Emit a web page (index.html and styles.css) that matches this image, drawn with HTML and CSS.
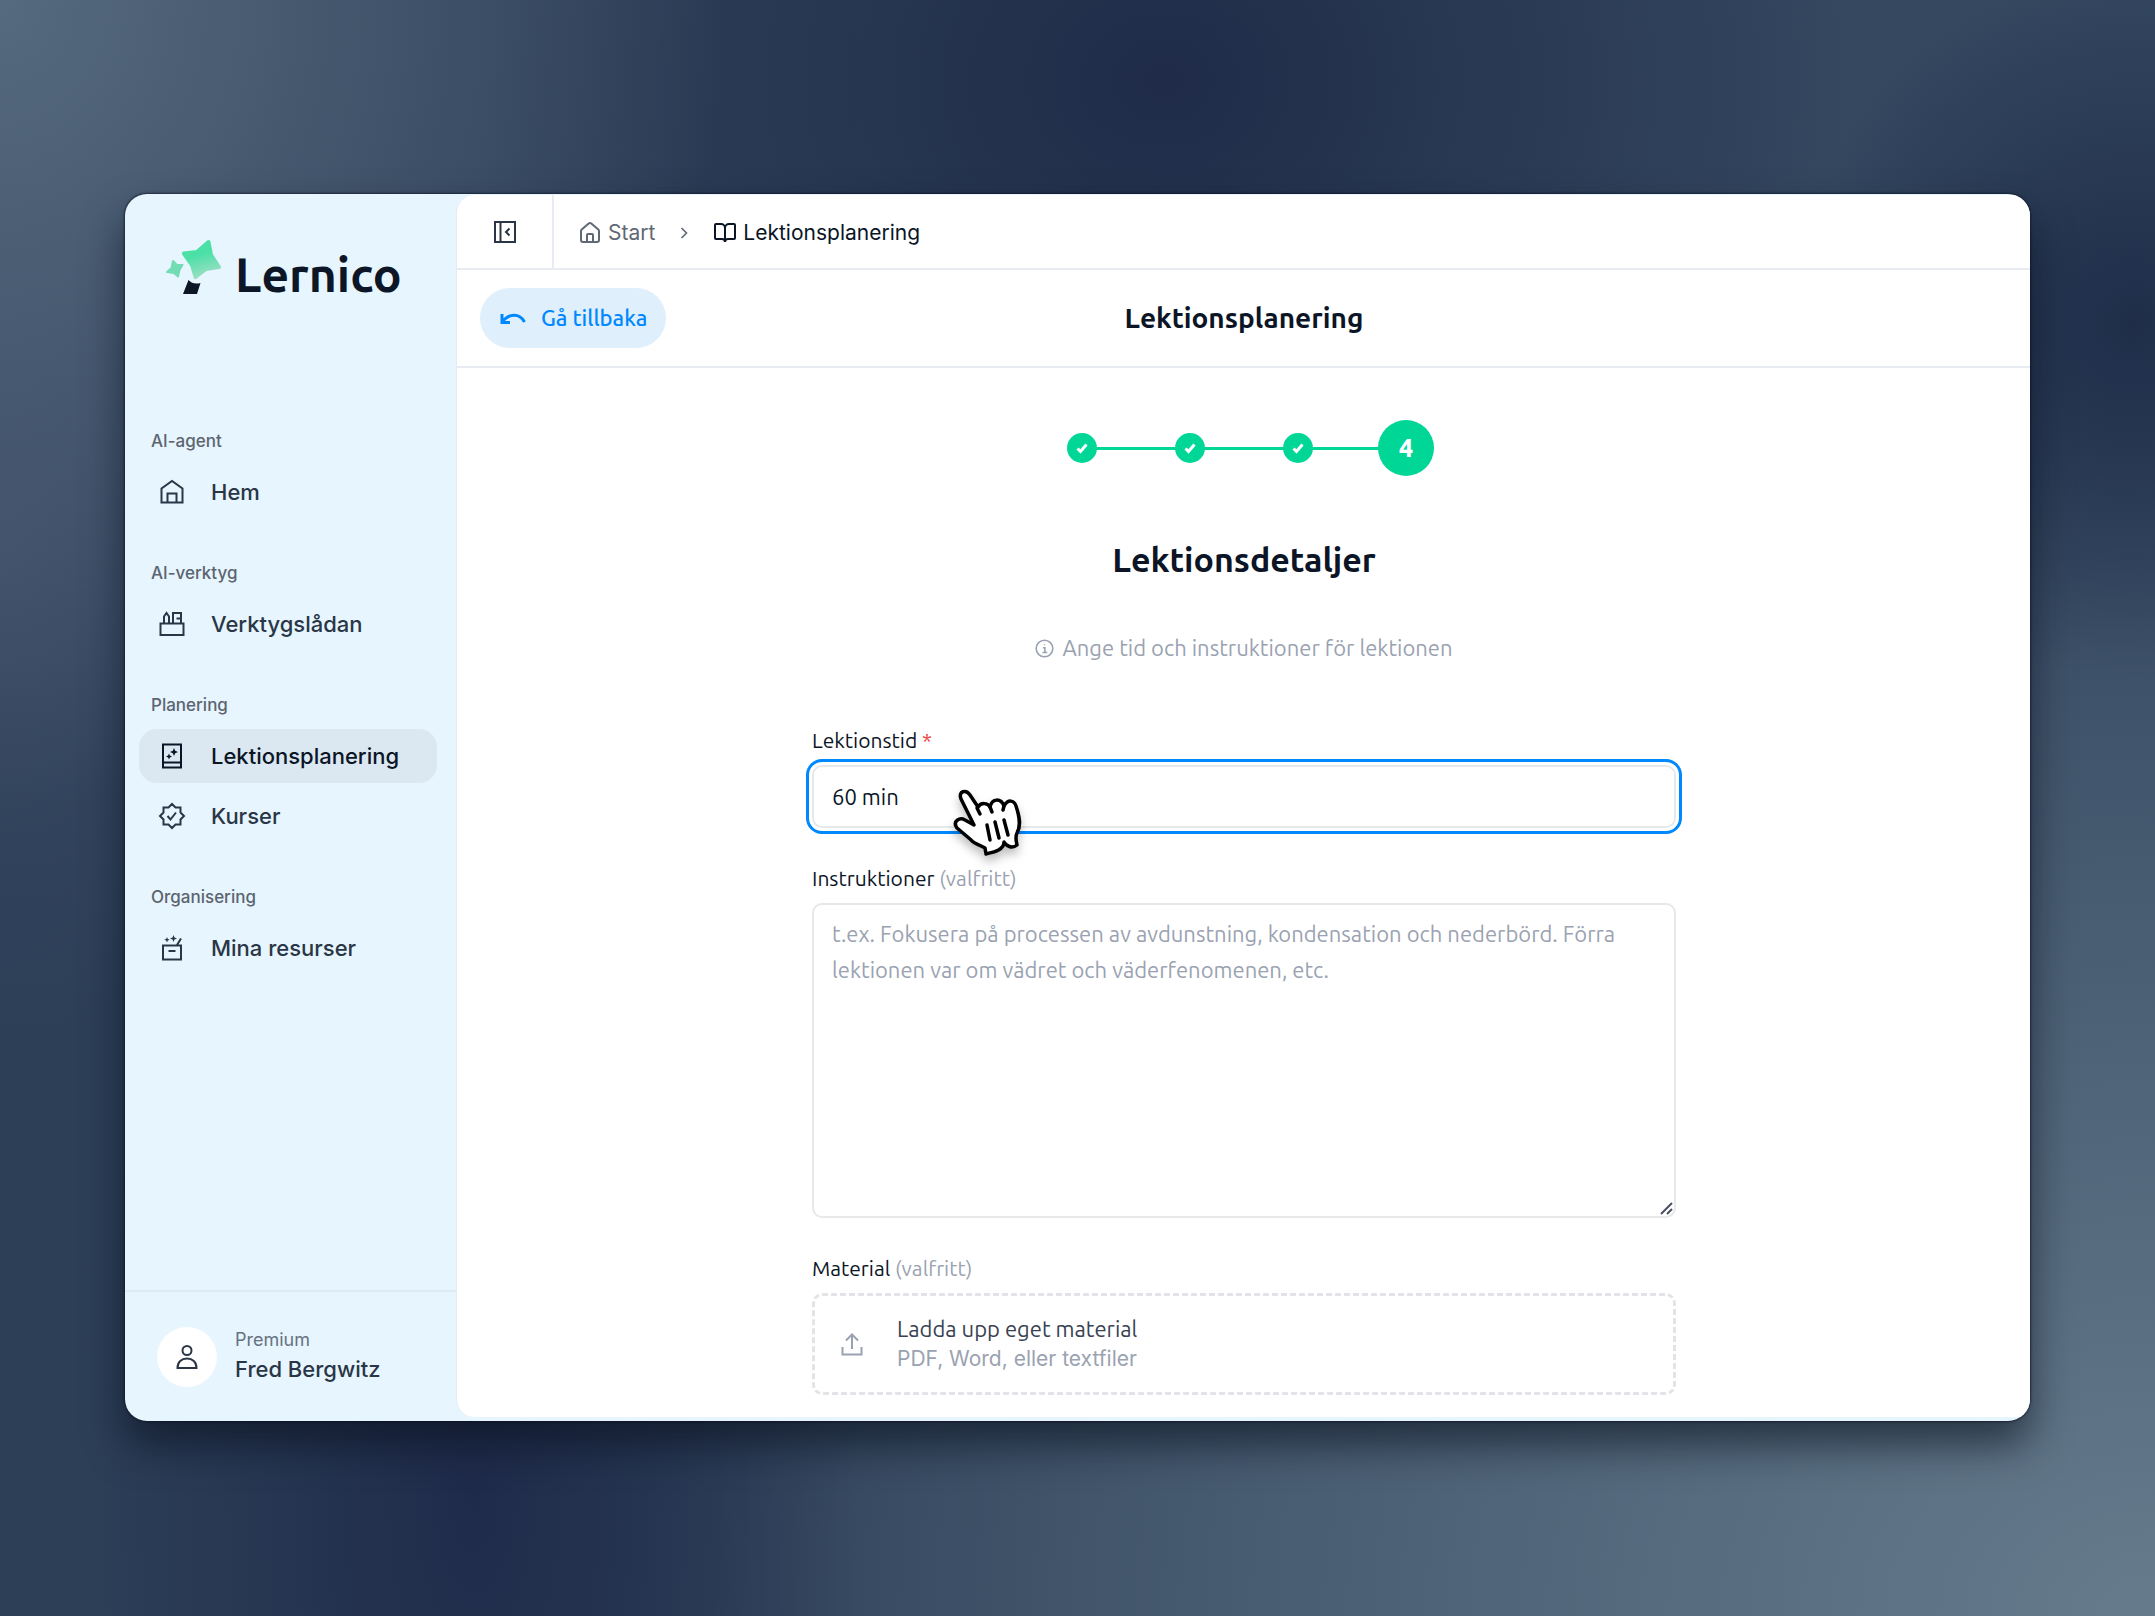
FILE: index.html
```
<!DOCTYPE html>
<html lang="sv">
<head>
    <meta charset="UTF-8">
    <meta name="viewport" content="width=device-width, initial-scale=1.0">
    <title>Lernico - Lektionsplanering</title>
    <link rel="stylesheet" href="styles.css">
</head>
<body>
    <div class="window">
        <aside class="sidebar">
            <a class="logo" href="#">
                <svg class="logo-mark" width="58" height="56" viewBox="0 0 58 56">
                    <defs>
                        <linearGradient id="star" x1="0" y1="0" x2="0.3" y2="1">
                            <stop offset="0.45" stop-color="#4be0a6"/>
                            <stop offset="1" stop-color="#93dfc0"/>
                        </linearGradient>
                    </defs>
                    <path d="M43.500 3 L46 16 L54 28 L41 30 L30.500 38 L27 26 L19 14.500 L32 13 Z" fill="url(#star)" stroke="url(#star)" stroke-width="4" stroke-linejoin="round"/>
                    <path d="M8 22 L12 26 L17.500 26 L14.500 31 L13 37.500 L9 34 L2 33 L6.500 29 Z" fill="#74dcb5" stroke="#74dcb5" stroke-width="2" stroke-linejoin="round"/>
                    <path d="M23.500 41 Q28 46 35.500 44 L32 55 H18 Z" fill="#0d1627"/>
                </svg>
                <span>Lernico</span>
            </a>

            <nav class="nav">
                <div class="nav-group">
                    <h3>AI-agent</h3>
                    <a class="nav-item" href="#">
                        <svg viewBox="0 0 28 28"><path d="M3.500 24.500V10.500L14 3l10.500 7.500v14z"/><path d="M9.500 24v-8.500h9V24"/></svg>
                        Hem
                    </a>
                </div>
                <div class="nav-group">
                    <h3>AI-verktyg</h3>
                    <a class="nav-item" href="#">
                        <svg viewBox="0 0 28 28"><path d="M2.500 13.500h23v11.500h-23z"/><path d="M6 13V6.500L8.500 3 11 6.500V13M15 13V3h8v10M18.500 8.500H23"/></svg>
                        Verktygslådan
                    </a>
                </div>
                <div class="nav-group">
                    <h3>Planering</h3>
                    <a class="nav-item active" href="#">
                        <svg viewBox="0 0 28 28"><path d="M5 2.500h18v23H5zM5 20.500h18"/><path class="solid" d="M16 6l1.200 2.800L20 10l-2.800 1.200L16 14l-1.200-2.800L12 10l2.800-1.200zM11 11.500l.9 2.100 2.100.9-2.100.9-.9 2.100-.9-2.100-2.100-.9 2.100-.9z"/></svg>
                        Lektionsplanering
                    </a>
                    <a class="nav-item" href="#">
                        <svg viewBox="0 0 28 28"><path d="M14 2l3.500 3.500H22.500V10.500L26 14l-3.500 3.500V22.500H17.500L14 26l-3.500-3.500H5.500V17.500L2 14l3.500-3.500V5.500H10.500z"/><path d="M9.500 14l3 3.500 5.500-7"/></svg>
                        Kurser
                    </a>
                </div>
                <div class="nav-group">
                    <h3>Organisering</h3>
                    <a class="nav-item" href="#">
                        <svg viewBox="0 0 28 28"><path d="M5 11.500h18v14H5zM10.500 17h7M19 11l4-6.500"/><path class="solid" d="M15.500 1l1 2.500 2.500 1-2.500 1-1 2.500-1-2.500-2.500-1 2.500-1zM9 3l.8 2 2 .8-2 .8L9 8.600l-.8-2-2-.8 2-.8z"/></svg>
                        Mina resurser
                    </a>
                </div>
            </nav>

            <div class="user">
                <div class="avatar">
                    <svg viewBox="0 0 28 28"><circle cx="14" cy="7.500" r="4.500"/><path d="M4.500 25c0-6 4-9.500 9.500-9.500s9.500 3.500 9.500 9.500z"/></svg>
                </div>
                <div class="user-text">
                    <div class="plan">Premium</div>
                    <div class="user-name">Fred Bergwitz</div>
                </div>
            </div>
        </aside>

        <main class="main">
            <header class="topbar">
                <button class="collapse" type="button" aria-label="Dölj meny">
                    <svg viewBox="0 0 28 28"><path d="M4 4h20v20H4zM9.500 4v20"/><path d="M18.500 10.500L15 14l3.500 3.500"/></svg>
                </button>
                <nav class="breadcrumb">
                    <a href="#">
                        <svg viewBox="0 0 24 24"><path d="M3 10a2 2 0 0 1 .7-1.500l7-6a2 2 0 0 1 2.600 0l7 6A2 2 0 0 1 21 10v9a2 2 0 0 1-2 2H5a2 2 0 0 1-2-2z"/><path d="M15 21v-7a1 1 0 0 0-1-1h-4a1 1 0 0 0-1 1v7"/></svg>
                        Start
                    </a>
                    <svg class="chevron" viewBox="0 0 24 24"><path d="M9 18l6-6-6-6"/></svg>
                    <a class="current" href="#">
                        <svg viewBox="0 0 24 24"><path d="M12 7v14M3 18a1 1 0 0 1-1-1V4a1 1 0 0 1 1-1h5a4 4 0 0 1 4 4 4 4 0 0 1 4-4h5a1 1 0 0 1 1 1v13a1 1 0 0 1-1 1h-6a3 3 0 0 0-3 3 3 3 0 0 0-3-3z"/></svg>
                        Lektionsplanering
                    </a>
                </nav>
            </header>

            <div class="titlebar">
                <button class="back" type="button">
                    <svg viewBox="0 0 28 28"><path d="M3 10v8.500h8M3.500 18C9 10 20 8 25.500 18"/></svg>
                    Gå tillbaka
                </button>
                <h1>Lektionsplanering</h1>
            </div>

            <section class="content">
                <ol class="steps">
                    <li><span class="dot"><svg viewBox="0 0 14 14"><path d="M2.500 7.500l3 3 6-7"/></svg></span></li>
                    <li><span class="dot"><svg viewBox="0 0 14 14"><path d="M2.500 7.500l3 3 6-7"/></svg></span></li>
                    <li><span class="dot"><svg viewBox="0 0 14 14"><path d="M2.500 7.500l3 3 6-7"/></svg></span></li>
                    <li><span class="dot current">4</span></li>
                </ol>

                <h2>Lektionsdetaljer</h2>
                <p class="hint">
                    <svg viewBox="0 0 24 24"><circle cx="12" cy="12" r="10.500"/><path d="M10 11h2.500v6M9.500 17h6M12 6.500v1.500"/></svg>
                    Ange tid och instruktioner för lektionen
                </p>

                <form class="form">
                    <div class="field">
                        <label for="time">Lektionstid <span class="required">*</span></label>
                        <input class="focused" id="time" type="text" value="60 min">
                        <svg class="cursor" width="72" height="72" viewBox="0 0 72 72">
                            <path d="M20 37 L7 11 C4 3 12 1 16 7 L24 19 C27 14 34 15 36 19 C38 10 47 10 50 18 C54 11 60 12 62 18 C66 30 67 38 63 45 C61 49 62 53 63 57 C58 61 52 58 50 54 C50 62 40 64 32 66 L31 60 C24 56 20 56 16 51 L3 40 C-2 33 6 29 11 32 L20 37 Z" fill="#fff" stroke="#000" stroke-width="3.500" stroke-linejoin="round"/>
                            <path d="M23 20l3 6M36 19l2 5M50 18l-1 4M33 37l3 15M41 34l4 16M50 32l4 15" fill="none" stroke="#000" stroke-width="3.500" stroke-linecap="round"/>
                        </svg>
                    </div>
                    <div class="field">
                        <label for="instructions">Instruktioner <span class="optional">(valfritt)</span></label>
                        <textarea id="instructions" placeholder="t.ex. Fokusera på processen av avdunstning, kondensation och nederbörd. Förra lektionen var om vädret och väderfenomenen, etc."></textarea>
                        <svg class="grip" width="14" height="14" viewBox="0 0 14 14"><path d="M1 12L12 1M7 12l5-5"/></svg>
                    </div>
                    <div class="field">
                        <label for="material">Material <span class="optional">(valfritt)</span></label>
                        <button class="upload" id="material" type="button">
                            <svg viewBox="0 0 28 28"><path d="M4.500 17v7.500h19V17M14 19V5M8 10.500L14 4.500l6 6"/></svg>
                            <span class="upload-text">
                                <span>Ladda upp eget material</span>
                                <small>PDF, Word, eller textfiler</small>
                            </span>
                        </button>
                    </div>
                </form>
            </section>
        </main>
    </div>
</body>
</html>
```
FILE: styles.css
```
* {
    box-sizing: border-box;
}

body {
    margin: 0;
    height: 100vh;
    padding: 194px 125px 195px;
    display: flex;
    font-family: Inter, sans-serif;
    color: #0b1526;
    background:
        radial-gradient(ellipse 34% 50% at 0% 0%, #566a7f 0%, rgba(86, 106, 127, 0) 100%),
        radial-gradient(ellipse 14% 30% at 0% 34%, rgba(71, 83, 111, 0.5) 0%, rgba(71, 83, 111, 0) 100%),
        radial-gradient(ellipse 32% 36% at 54% 5%, #1f2b48 0%, rgba(31, 43, 72, 0) 100%),
        radial-gradient(ellipse 16% 22% at 99% 20%, #1f2d49 0%, rgba(31, 45, 73, 0) 100%),
        radial-gradient(ellipse 18% 60% at 22% 92%, #1f2b4a 0%, rgba(31, 43, 74, 0) 100%),
        radial-gradient(ellipse 70% 72% at 100% 100%, #667c8d 0%, rgba(94, 115, 133, 0) 100%),
        linear-gradient(90deg, #2c3f57 0%, #2e4058 30%, #34475f 60%, #344860 100%);
}

svg {
    fill: none;
    stroke: currentColor;
    stroke-width: 2;
    flex-shrink: 0;
}

a {
    color: inherit;
    text-decoration: none;
}

button {
    font: inherit;
    color: inherit;
    border: none;
    background: none;
    cursor: pointer;
}

.solid {
    fill: currentColor;
    stroke: none;
}

.window {
    flex: 1;
    display: flex;
    padding: 1px 0 4px;
    border-radius: 22px;
    overflow: hidden;
    background: #e6f5fe;
    box-shadow: 0 0 2px 1px rgba(8, 15, 30, 0.6), 0 24px 40px rgba(8, 15, 30, 0.6);
}

/* Sidebar */
.sidebar {
    width: 331px;
    display: flex;
    flex-direction: column;
    color: #2a3646;
}

.logo {
    display: flex;
    align-items: flex-start;
    gap: 12px;
    padding: 44px 0 0 40px;
    height: 114px;
    color: #0d1627;
    font-family: Ubuntu, "Noto Sans", sans-serif;
    font-size: 48px;
    line-height: 70px;
    font-weight: 700;
}

.logo-mark {
    stroke: none;
}

.nav {
    flex: 1;
    padding: 117px 19px 0 14px;
}

.nav-group {
    margin-bottom: 39px;
}

.nav-group h3 {
    margin: 0 0 9px;
    padding-left: 12px;
    font-size: 17px;
    line-height: 30px;
    font-weight: 500;
    color: #5c646f;
}

.nav-item {
    display: flex;
    align-items: center;
    gap: 25px;
    height: 54px;
    margin-bottom: 6px;
    padding-left: 19px;
    border-radius: 18px;
    font-size: 22px;
    font-weight: 500;
}

.nav-item svg {
    width: 28px;
    height: 28px;
}

.nav-item.active {
    background: #dbe8f2;
    color: #0b1526;
}

.user {
    display: flex;
    align-items: center;
    gap: 18px;
    height: 127px;
    padding: 4px 0 0 32px;
    border-top: 2px solid #dfeaf4;
}

.avatar {
    width: 60px;
    height: 60px;
    border-radius: 50%;
    background: #fff;
    display: flex;
    align-items: center;
    justify-content: center;
}

.avatar svg {
    width: 28px;
    height: 28px;
}

.user-text {
    padding-bottom: 4px;
}

.plan {
    font-size: 18px;
    line-height: 28px;
    color: #677281;
}

.user-name {
    font-size: 22px;
    line-height: 30px;
    font-weight: 500;
}

/* Main panel */
.main {
    flex: 1;
    min-width: 0;
    background: #fff;
    border-left: 1px solid #e4ecf5;
    border-radius: 18px 0 0 18px;
    overflow: hidden;
}

.topbar {
    display: flex;
    height: 75px;
    border-bottom: 2px solid #e9ebf3;
}

.collapse {
    width: 97px;
    padding: 0;
    border-right: 2px solid #e9ebf3;
    color: #2a3646;
}

.collapse svg {
    width: 28px;
    height: 28px;
    vertical-align: middle;
}

.breadcrumb {
    display: flex;
    align-items: center;
    gap: 17px;
    padding: 2px 0 0 24px;
    font-size: 21px;
    color: #5f6875;
}

.breadcrumb a {
    display: flex;
    align-items: center;
    gap: 6px;
}

.breadcrumb svg {
    width: 24px;
    height: 24px;
}

.breadcrumb .chevron {
    width: 24px;
    height: 20px;
}

.breadcrumb .current {
    color: #0b1526;
}

.titlebar {
    display: grid;
    grid-template-columns: 1fr auto 1fr;
    align-items: center;
    height: 98px;
    padding: 0 22px 0 23px;
    border-bottom: 2px solid #e9ebf3;
    font-family: Ubuntu, "Noto Sans", sans-serif;
}

.titlebar h1 {
    margin: 0;
    font-size: 28px;
    line-height: 34px;
    font-weight: 600;
}

.back {
    justify-self: start;
    display: flex;
    align-items: center;
    gap: 14px;
    height: 60px;
    padding: 0 19px;
    border-radius: 30px;
    background: #dfeffb;
    color: #0088ff;
    font-size: 22px;
    line-height: 24px;
    font-weight: 500;
}

.back svg {
    width: 28px;
    height: 28px;
    stroke-width: 3;
}

.content {
    display: flex;
    flex-direction: column;
    align-items: center;
    padding: 52px 22px 0 23px;
    font-family: Ubuntu, "Noto Sans", sans-serif;
}

.steps {
    display: grid;
    grid-template-columns: repeat(4, 108px);
    margin: 0;
    padding: 0;
    list-style: none;
}

.steps li {
    position: relative;
    display: flex;
    align-items: center;
    justify-content: center;
    height: 56px;
}

/* connector back to the previous step */
.steps li + li::before {
    content: "";
    position: absolute;
    right: 50%;
    width: 100%;
    height: 3px;
    background: #00d797;
}

.dot {
    position: relative;
    z-index: 1;
    display: flex;
    align-items: center;
    justify-content: center;
    width: 30px;
    height: 30px;
    border-radius: 50%;
    background: #00d797;
    color: #fff;
}

.dot svg {
    width: 14px;
    height: 14px;
    stroke-width: 3;
}

.dot.current {
    width: 56px;
    height: 56px;
    font-size: 25px;
    font-weight: 800;
}

.content h2 {
    margin: 59px 0 0;
    font-size: 34px;
    line-height: 48px;
    font-weight: 600;
}

.hint {
    display: flex;
    align-items: center;
    gap: 8px;
    margin: 49px 0 0;
    font-size: 22px;
    line-height: 32px;
    color: #9aa2b1;
}

.hint svg {
    width: 19px;
    height: 19px;
}

.form {
    width: 100%;
    max-width: 864px;
    margin-top: 61px;
    display: flex;
    flex-direction: column;
    gap: 35px;
}

.field {
    position: relative;
    display: flex;
    flex-direction: column;
    gap: 10px;
}

.field label {
    font-size: 21px;
    line-height: 30px;
}

.required {
    color: #ef4444;
}

.optional {
    color: #9aa2b1;
}

.field input,
.field textarea {
    font: inherit;
    font-size: 22px;
    color: #0b1526;
    padding: 11px 18px;
    border: 2px solid #e7e8ea;
    border-radius: 10px;
    background: #fff;
}

.field input {
    height: 63px;
    padding-bottom: 12px;
}

.field input.focused {
    outline: 3px solid #0088ff;
    outline-offset: 3px;
}

.field textarea {
    height: 315px;
    line-height: 36px;
    resize: none;
}

.field textarea::placeholder {
    color: #9aa2b1;
}

.grip {
    position: absolute;
    right: 2px;
    bottom: 2px;
    color: #4b5160;
}

.cursor {
    position: absolute;
    left: 142px;
    top: 63px;
    overflow: visible;
    filter: drop-shadow(0 6px 5px rgba(0, 0, 0, 0.25));
}

.upload {
    display: flex;
    align-items: center;
    gap: 31px;
    height: 102px;
    padding: 0 23px;
    border: 3px dashed #e3e4e7;
    border-radius: 10px;
    text-align: left;
    color: #9aa2b1;
}

.upload svg {
    width: 28px;
    height: 28px;
}

.upload-text {
    display: flex;
    flex-direction: column;
    font-size: 22px;
    line-height: 30px;
    color: #374253;
}

.upload-text small {
    font-family: Inter, sans-serif;
    font-size: 21px;
    color: #9aa2b1;
}
```
